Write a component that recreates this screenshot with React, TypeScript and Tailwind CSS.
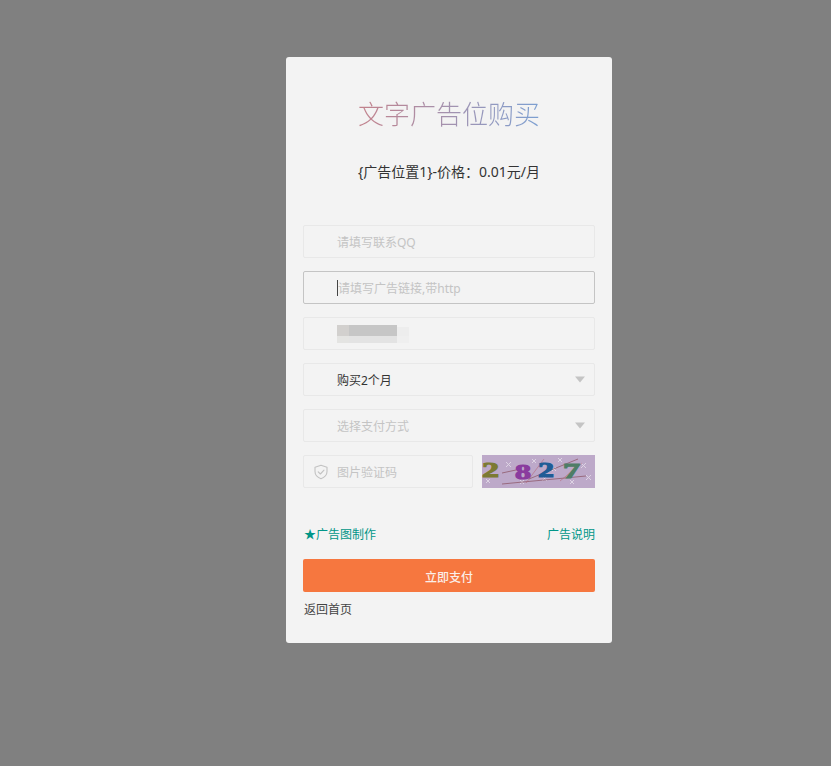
const font = "font-['Noto_Sans','Noto_Sans_CJK_SC',sans-serif]";

function Caret() {
  return (
    <svg width="10" height="7" viewBox="0 0 10 7" className="shrink-0">
      <path d="M0 0.5h10L5 6.5z" fill="#c4c4c4" />
    </svg>
  );
}

function ShieldIcon() {
  return (
    <svg width="16" height="16" viewBox="0 0 16 16" fill="none" stroke="#c2c2c2" strokeWidth="1.1" className="shrink-0">
      <path d="M8 1.2 14 3.2v4.4c0 3.4-2.6 5.9-6 7.2-3.4-1.3-6-3.8-6-7.2V3.2z" strokeLinejoin="round" />
      <path d="M5.2 7.8 7.4 10l3.6-3.8" strokeLinecap="round" strokeLinejoin="round" />
    </svg>
  );
}

function Field({ children, active, className }: { children: React.ReactNode; active?: boolean; className?: string }) {
  return (
    <div
      className={`flex h-[33px] items-center rounded-[2px] border ${active ? "border-[#c4c4c4]" : "border-[#e8e8e8]"} ${className ?? "w-full pl-[33px] pr-[9px]"}`}
    >
      {children}
    </div>
  );
}

function Captcha() {
  return (
    <svg width="113" height="33" viewBox="0 0 113 33" className="shrink-0">
      <rect width="113" height="33" fill="#bda9c9" />
      <g stroke="#e4dce9" strokeWidth="0.9" opacity="0.9">
        <path d="M24 7l5 5M29 7l-5 5M50 4l4 4M54 4l-4 4M60 21l5 5M65 21l-5 5M76 3l4 4M80 3l-4 4M99 8l5 5M104 8l-5 5M104 20l5 5M109 20l-5 5M38 25l4 4M42 25l-4 4M88 25l4 4M92 25l-4 4M4 24l4 4M8 24l-4 4M70 12l4 4M74 12l-4 4" />
      </g>
      <path d="M20 18L34 15M20 29L104 21M47 24L96 4" stroke="#8f5a6c" strokeWidth="0.8" fill="none" />
      <path d="M44 28L62 4M78 26L100 8" stroke="#b5697a" strokeWidth="0.6" fill="none" />
      <g fontFamily="'Liberation Serif', serif" fontWeight="700" fontSize="22" strokeWidth="1.1">
        <text x="0" y="22" fill="#7c7a33" stroke="#7c7a33" textLength="17" lengthAdjust="spacingAndGlyphs">2</text>
        <text x="33" y="24" fill="#8a3c9e" stroke="#8a3c9e" textLength="16" lengthAdjust="spacingAndGlyphs">8</text>
        <text x="56" y="22" fill="#1f5c96" stroke="#1f5c96" textLength="16" lengthAdjust="spacingAndGlyphs">2</text>
        <text x="81" y="23" fill="#4f7d66" stroke="#4f7d66" textLength="17" lengthAdjust="spacingAndGlyphs">7</text>
      </g>
    </svg>
  );
}

function Mosaic() {
  return (
    <div className="flex flex-col blur-[0.6px]">
      <div className="flex h-[11px]">
        <div className="w-[12px] bg-[#d2d0ce]" />
        <div className="w-[48px] bg-[#c6c6c6]" />
        <div className="mt-[2px] w-[12px] bg-[#ededed]" />
      </div>
      <div className="flex h-[7px]">
        <div className="w-[12px] bg-[#e4e4e2]" />
        <div className="w-[48px] bg-[#e3e3e3]" />
        <div className="w-[12px] bg-[#efefef]" />
      </div>
    </div>
  );
}

export default function App() {
  return (
    <div className={`${font} min-h-[766px] bg-[#808080] pl-[286px] pt-[57px]`}>
      <div className="h-[586px] w-[326px] rounded-[3px] bg-[#f3f3f3] px-[17px]">
        <h1 className="bg-gradient-to-r from-[#d27474] to-[#5aa6e6] bg-clip-text pt-[38px] text-center text-[26px] leading-[36px] font-light text-transparent [font-family:'Noto_Sans_CJK_SC',sans-serif]">
          文字广告位购买
        </h1>
        <p className="mt-[31px] text-center text-[14px] leading-[20px] text-[#333]">
          {"{广告位置1}-价格：0.01元/月"}
        </p>

        <div className="mt-[43px] flex flex-col gap-[13px] text-[12px]">
          <Field>
            <span className="pt-[2px] text-[#c4c4c4]">请填写联系QQ</span>
          </Field>
          <Field active>
            <span className="h-[16px] w-px bg-[#444]" />
            <span className="pt-[2px] text-[#c4c4c4]">请填写广告链接,带http</span>
          </Field>
          <Field>
            <Mosaic />
          </Field>
          <Field>
            <span className="flex-1 pt-[2px] text-[#333]">购买2个月</span>
            <Caret />
          </Field>
          <Field>
            <span className="flex-1 pt-[2px] text-[#c4c4c4]">选择支付方式</span>
            <Caret />
          </Field>
          <div className="flex justify-between">
            <Field className="w-[170px] gap-[8px] pl-[9px]">
              <ShieldIcon />
              <span className="pt-[2px] text-[#c4c4c4]">图片验证码</span>
            </Field>
            <Captcha />
          </div>
        </div>

        <div className="mt-[38px] flex justify-between pl-px text-[12px] leading-[18px] text-[#009688]">
          <span>★广告图制作</span>
          <span>广告说明</span>
        </div>
        <button className="mt-[15px] h-[33px] w-full rounded-[2px] bg-[#f6773f] pt-[4px] text-[12px] font-medium text-[#fbeee8]">
          立即支付
        </button>
        <p className="mt-[9px] pl-px text-[12px] leading-[18px] text-[#444]">返回首页</p>
      </div>
    </div>
  );
}
